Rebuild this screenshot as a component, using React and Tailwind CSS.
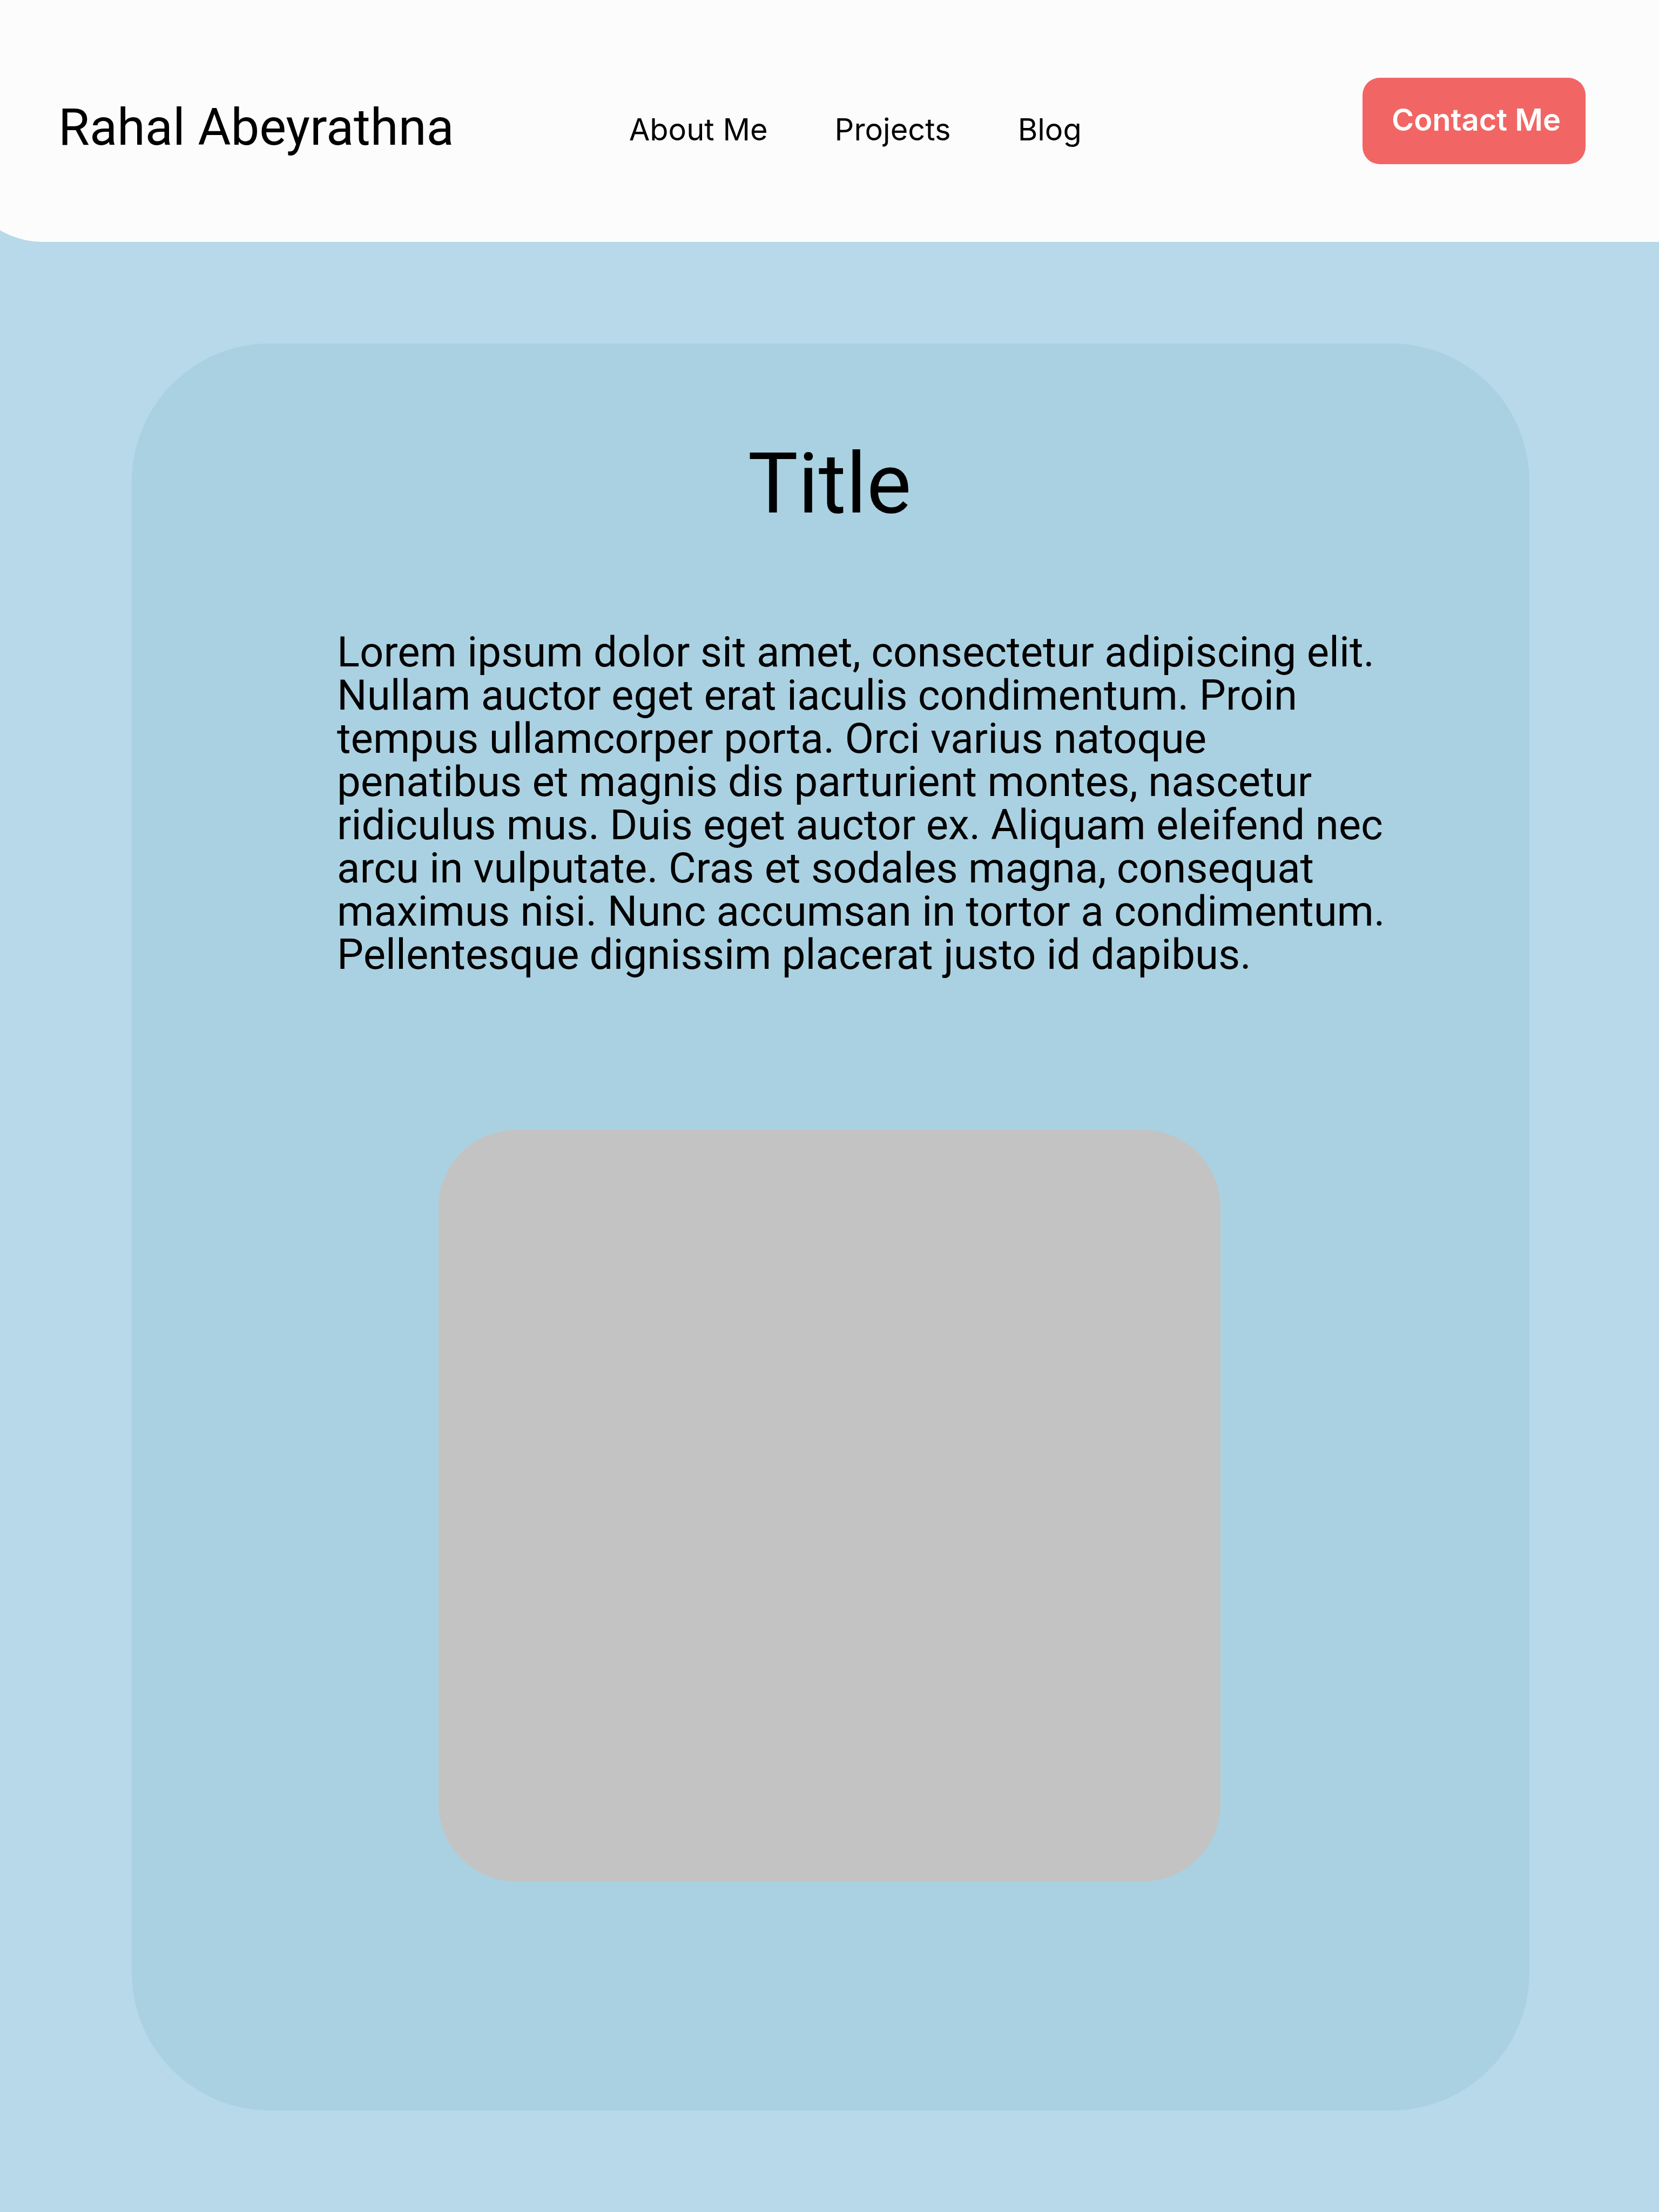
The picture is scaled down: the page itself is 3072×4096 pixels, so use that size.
const links = [
  { label: 'About Me', href: '#about' },
  { label: 'Projects', href: '#projects' },
  { label: 'Blog', href: '#blog' },
];

function Header() {
  return (
    <header className="-ml-20 flex min-h-[448px] items-center rounded-bl-[160px] bg-[#fcfcfc] pr-[136px] pl-[188px]">
      <a href="#home" className="pt-6 font-['Roboto',sans-serif] text-[94px] leading-none whitespace-nowrap">
        Rahal Abeyrathna
      </a>
      <nav className="ml-[324px] flex gap-[124px] pt-8 text-[56px] leading-none whitespace-nowrap">
        {links.map((link) => (
          <a key={link.href} href={link.href}>
            {link.label}
          </a>
        ))}
      </nav>
      <button
        type="button"
        className="ml-auto h-[160px] rounded-[32px] bg-[#f16664] pr-[46px] pb-1 pl-[54px] text-[56px] leading-none font-semibold whitespace-nowrap text-white"
      >
        Contact Me
      </button>
    </header>
  );
}

function Article() {
  return (
    <article className="rounded-[256px] bg-[#aad1e1] pt-[180px] pr-1 pb-[424px] font-['Roboto',sans-serif]">
      <h1 className="text-center text-[156px] leading-[160px]">Title</h1>
      <p className="mt-48 mr-[244px] ml-[380px] text-[78px] leading-[80px]">
        Lorem ipsum dolor sit amet, consectetur adipiscing elit. Nullam auctor eget erat iaculis condimentum. Proin
        tempus ullamcorper porta. Orci varius natoque penatibus et magnis dis parturient montes, nascetur ridiculus
        mus. Duis eget auctor ex. Aliquam eleifend nec arcu in vulputate. Cras et sodales magna, consequat maximus
        nisi. Nunc accumsan in tortor a condimentum. Pellentesque dignissim placerat justo id dapibus.
      </p>
      <div className="mx-auto mt-[284px] h-[1392px] w-[56%] rounded-[144px] bg-[#c3c3c3]" />
    </article>
  );
}

export default function App() {
  return (
    <div className="min-h-screen overflow-x-hidden bg-[#b7d9e9] font-['Inter',sans-serif] text-black">
      <Header />
      <main className="pt-[188px] pr-[240px] pb-[188px] pl-[244px]">
        <Article />
      </main>
    </div>
  );
}
